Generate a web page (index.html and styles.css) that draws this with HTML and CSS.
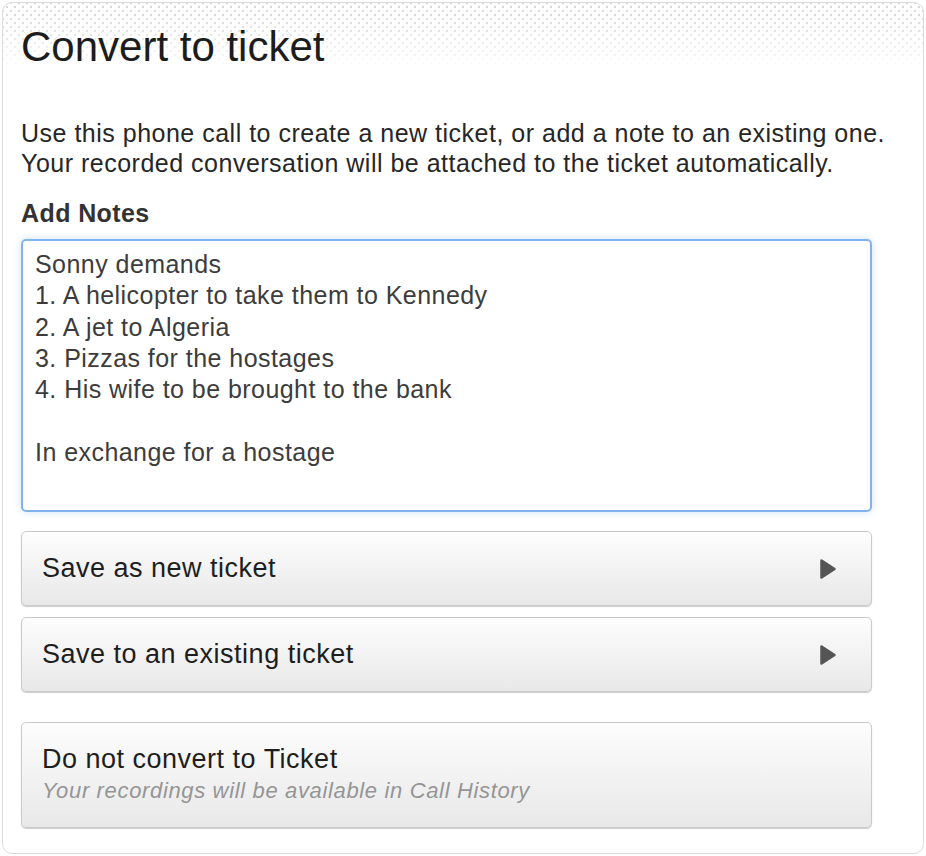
FILE: index.html
```html
<!DOCTYPE html>
<html>
<head>
<meta charset="utf-8">
<link rel="stylesheet" href="styles.css">
</head>
<body>
<div class="card">
  <div class="header">
    <h1 class="title">Convert to ticket</h1>
  </div>
  <div class="content">
    <p class="intro">Use this phone call to create a new ticket, or add a note to an existing one.<br>Your recorded conversation will be attached to the ticket automatically.</p>
    <label class="label">Add Notes</label>
    <div class="notes">Sonny demands
1. A helicopter to take them to Kennedy
2. A jet to Algeria
3. Pizzas for the hostages
4. His wife to be brought to the bank

In exchange for a hostage</div>
    <div class="actions">
      <div class="btn"><span>Save as new ticket</span><svg class="arrow" width="18" height="22" viewBox="0 0 18 22"><path d="M2.5 2.5 L15.5 11 L2.5 19.5 Z" fill="#555" stroke="#555" stroke-width="2.5" stroke-linejoin="round"/></svg></div>
      <div class="btn"><span>Save to an existing ticket</span><svg class="arrow" width="18" height="22" viewBox="0 0 18 22"><path d="M2.5 2.5 L15.5 11 L2.5 19.5 Z" fill="#555" stroke="#555" stroke-width="2.5" stroke-linejoin="round"/></svg></div>
    </div>
    <div class="btn btn-tall">
      <div class="btn-main">Do not convert to Ticket</div>
      <div class="btn-sub">Your recordings will be available in Call History</div>
    </div>
  </div>
</div>
</body>
</html>
```
FILE: styles.css
```css
html, body {
  margin: 0;
  padding: 0;
  background: #fff;
}
body {
  padding: 2px;
  font-family: "Liberation Sans", Arial, sans-serif;
}
.card {
  width: 920px;
  height: 850px;
  border: 1px solid #dcdcdc;
  border-radius: 10px;
  overflow: hidden;
  background: #fff;
}
.header {
  padding: 19px 18px 0;
  height: 60px;
  background:
    linear-gradient(to bottom, rgba(255,255,255,0) 0px, rgba(255,255,255,0.2) 20px, #fff 66px),
    radial-gradient(circle, #d6d6d6 1.1px, transparent 1.6px) 0 0 / 8px 8px,
    radial-gradient(circle, #d6d6d6 1.1px, transparent 1.6px) 4px 4px / 8px 8px;
}
.title {
  margin: 0;
  font-size: 42px;
  font-weight: normal;
  line-height: 50px;
  color: #1c1c1c;
}
.content {
  padding: 0 51px 0 18px;
}
.intro {
  margin: 36px 0 0;
  white-space: nowrap;
  font-size: 25px;
  letter-spacing: 0.5px;
  line-height: 30px;
  color: #262626;
}
.label {
  display: block;
  margin-top: 22px;
  font-size: 25px;
  letter-spacing: 0.4px;
  font-weight: bold;
  line-height: 26px;
  color: #333;
}
.notes {
  margin-top: 13px;
  box-sizing: border-box;
  height: 273px;
  border: 2px solid #7fb4f0;
  border-radius: 5px;
  box-shadow: 0 0 8px rgba(120, 175, 240, 0.35);
  padding: 8px 12px 7px;
  white-space: pre-wrap;
  font-size: 25px;
  letter-spacing: 0.45px;
  line-height: 31.3px;
  color: #3c3c3c;
}
.actions {
  margin-top: 19px;
  display: flex;
  flex-direction: column;
  gap: 11px;
}
.btn {
  box-sizing: border-box;
  height: 75px;
  border: 1px solid #cacaca;
  border-radius: 5px;
  background: linear-gradient(to bottom, #fdfdfd, #e8e8e8);
  box-shadow: 0 1px 1px rgba(0,0,0,0.2);
  display: flex;
  align-items: center;
  justify-content: space-between;
  padding: 0 34px 0 20px;
  font-size: 27px;
  letter-spacing: 0.5px;
  color: #1e1e1e;
}
.arrow {
  display: block;
}
.btn-tall {
  margin-top: 30px;
  height: 106px;
  flex-direction: column;
  align-items: flex-start;
  justify-content: center;
}
.btn-main {
  font-size: 27px;
  letter-spacing: 0.5px;
  line-height: 31px;
  color: #1e1e1e;
}
.btn-sub {
  font-size: 22px;
  letter-spacing: 0.65px;
  line-height: 31px;
  font-style: italic;
  color: #959595;
}
```
